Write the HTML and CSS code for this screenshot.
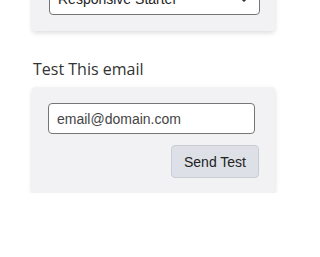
FILE: index.html
```html
<!DOCTYPE html>
<html>
<head>
<meta charset="utf-8">
<link rel="stylesheet" href="styles.css">
</head>
<body>
<div class="page">
  <section class="card card-top">
    <div class="select-wrap">
      <select class="select">
        <option>Responsive Starter</option>
      </select>
      <svg class="chev" width="10" height="6" viewBox="0 0 10 6"><path d="M1 1l4 4 4-4" fill="none" stroke="#333" stroke-width="1.5"/></svg>
    </div>
  </section>
  <h2 class="heading">Test This email</h2>
  <section class="card">
    <input class="email" type="text" value="email@domain.com">
    <div class="actions">
      <button class="btn">Send Test</button>
    </div>
  </section>
</div>
</body>
</html>
```
FILE: styles.css
```css
html, body {
  margin: 0;
  padding: 0;
  background: #fff;
}
.page {
  width: 243px;
  margin: -33px 0 0 32px;
  font-family: "Open Sans", sans-serif;
}
.card {
  background: #f2f2f5;
  border-radius: 4px;
  box-shadow: 0 2px 5px rgba(0, 0, 0, 0.14);
  padding: 16px 16px 15px 16px;
}
.card-top {
  padding: 16px 15px 16px 17px;
}
.select-wrap {
  position: relative;
}
.select {
  display: block;
  width: 100%;
  height: 32px;
  box-sizing: border-box;
  appearance: none;
  -webkit-appearance: none;
  background: #fff;
  border: 1px solid #767676;
  border-radius: 4px;
  padding: 0 8px;
  font-family: "Liberation Sans", Arial, sans-serif;
  font-size: 14px;
  color: #222;
}
.chev {
  position: absolute;
  right: 11px;
  top: 13px;
}
.heading {
  margin: 26px 0 6px 1px;
  font-size: 16px;
  line-height: 24px;
  font-weight: 400;
  color: #333;
}
.email {
  display: block;
  width: 207px;
  height: 31px;
  box-sizing: border-box;
  margin: 0;
  border: 1px solid #767676;
  border-radius: 4px;
  padding: 0 8px;
  background: #fff;
  font-family: "Liberation Sans", Arial, sans-serif;
  font-size: 14px;
  color: #444;
  outline: none;
}
.actions {
  display: flex;
  justify-content: flex-end;
  margin-top: 11px;
}
.btn {
  width: 88px;
  height: 33px;
  box-sizing: border-box;
  margin: 0;
  padding: 0;
  background: #dde1e7;
  border: 1px solid #c9cdd3;
  border-radius: 4px;
  font-family: "Liberation Sans", Arial, sans-serif;
  font-size: 14px;
  color: #222;
}
```
